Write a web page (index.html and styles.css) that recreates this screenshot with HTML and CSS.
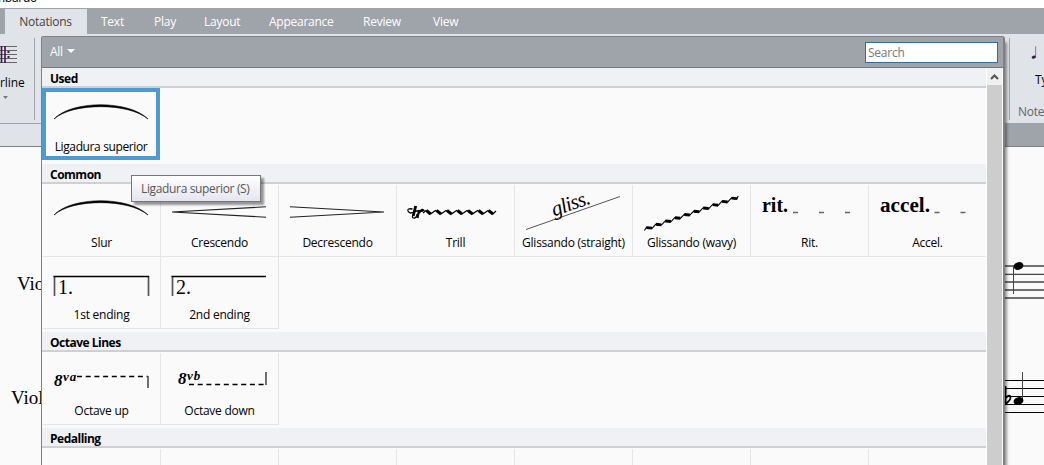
FILE: index.html
```html
<!DOCTYPE html>
<html lang="en">
<head>
<meta charset="utf-8">
<title>Notations</title>
<link rel="stylesheet" href="styles.css">
</head>
<body>
<div class="app">
  <div class="titlebar"><span>mbardo</span></div>
  <nav class="tabs">
    <span class="tab active">Notations</span><span class="tab t-text">Text</span><span class="tab t-play">Play</span><span class="tab t-layout">Layout</span><span class="tab t-app">Appearance</span><span class="tab t-review">Review</span><span class="tab t-view">View</span>
  </nav>
  <div class="ribbon">
    <div class="group barline">
      <svg width="18" height="18" viewBox="0 0 18 18"><path d="M0 .5H17M0 4.5H17M0 8.5H17M0 12.5H17M0 16.5H17" stroke="#666" fill="none"/><path d="M1.500 0V17M5 0V17" stroke="#42154f" stroke-width="1.6"/><path d="M7.500 5h2v2h-2zM7.500 10h2v2h-2z" fill="#42154f"/></svg>
      <span class="rlabel">rline</span>
      <svg class="drop" width="6" height="4"><path d="M0 0H5L2.500 3Z" fill="#777"/></svg>
    </div>
    <div class="group note">
      <svg width="34" height="20" viewBox="0 0 34 20"><path d="M28.500 3V18" stroke="#74577d"/><ellipse cx="26" cy="17.500" rx="2.800" ry="1.900" fill="#42154f" transform="rotate(-20 26 17.500)"/></svg>
      <span class="rlabel ty">Ty</span>
      <span class="gname">Note</span>
    </div>
  </div>
  <div class="strip"><div class="strip-start"></div></div>
  <div class="score">
    <span class="inst v1">Vio</span>
    <span class="inst v2">Viol</span>
    <svg class="staves" width="60" height="318" viewBox="984 147 60 318"><g fill="none" stroke="#444"><path d="M984 266H1044M984 274.300H1044M984 282H1044M984 290H1044M984 298H1044" stroke-width="1.300"/><path d="M984 380.500H1044M984 388.500H1044M984 396.500H1044M984 404.500H1044M984 412.500H1044" stroke="#000"/><path d="M1013.500 267V294M1022.500 372V400"/></g><ellipse cx="1018.500" cy="266" rx="5" ry="3.800" transform="rotate(-18 1018.500 266)"/><ellipse cx="1018.500" cy="401" rx="5" ry="3.800" transform="rotate(-18 1018.500 401)"/><path d="M1005.500 386V404Q1011 400 1010.500 397T1005.500 398" fill="none" stroke="#000" stroke-width="1.800"/></svg>
  </div>
</div>

<div class="gallery">
  <header class="bar"><span class="filter">All<svg width="8" height="5"><path d="M0 0H8L4 4Z" fill="#fff"/></svg></span><input class="search" placeholder="Search"></header>
  <div class="body">
    <div class="list">
      <h2>Used</h2>
      <div class="grid">
        <div class="item selected"><svg viewBox="0 0 117 48"><path d="M11 30C29 11 86 11 105 30C86 13.500 29 13.500 11 30Z" stroke="#000" stroke-width=".6"/></svg><span class="l-lig">Ligadura superior</span></div>
      </div>
      <h2>Common</h2>
      <div class="grid">
        <div class="item"><svg viewBox="0 0 117 48"><path d="M11 30C29 11 86 11 105 30C86 13.500 29 13.500 11 30Z" stroke="#000" stroke-width=".6"/></svg><span>Slur</span></div>
        <div class="item"><svg viewBox="0 0 117 48"><path class="ln" d="M105 21.800L11 27L105 32.200"/></svg><span>Crescendo</span></div>
        <div class="item"><svg viewBox="0 0 117 48"><path class="ln" d="M11 21.800L105 27L11 32.200"/></svg><span>Decrescendo</span></div>
        <div class="item"><svg viewBox="0 0 117 48"><g fill="none" stroke="#000"><path d="M18 21L15.500 31Q15 33.500 18 33Q20 32 20 29M15.500 24Q10 23 11 26Q13 30 18 26H26" stroke-width="1.300"/><path d="M19 21L16.500 31M22 25L20.500 33M22 28Q25 23 27 26" stroke-width="2.200"/><path d="M26 28L29 25.500L33.500 29L38.500 25.500L44 29L49 25.500L54.500 29L59.500 25.500L65 29L70 25.500L75.500 29L80.500 25.500L86 29L91 25.500L96 29L99 26" stroke-width="1.200"/><path d="M29.500 25.500L33.500 29M39.500 25.500L44 29M50 25.500L54.500 29M60.500 25.500L65 29M71 25.500L75.500 29M81.500 25.500L86 29M91.500 25.500L96 29" stroke-width="3"/></g></svg><span>Trill</span></div>
        <div class="item"><svg viewBox="0 0 117 48"><path d="M11 44.500L105 11.500" stroke="#555"/><text class="gliss" x="39" y="31.500" transform="rotate(-19.500 39 31.500)" textLength="40">gliss.</text></svg><span>Glissando (straight)</span></div>
        <div class="item"><svg viewBox="0 0 117 48"><g transform="translate(11 44.500) rotate(-19.100)" fill="none" stroke="#000"><path d="M0 1L3-1.200L8 1.500L13-1.200L18 1.500L23-1.200L28 1.500L33-1.200L38 1.500L43-1.200L48 1.500L53-1.200L58 1.500L63-1.200L68 1.500L73-1.200L78 1.500L83-1.200L88 1.500L93-1.200L98 1.500L100-1" stroke-width="1.100"/><path d="M3-1L8 1.300M13-1L18 1.300M23-1L28 1.300M33-1L38 1.300M43-1L48 1.300M53-1L58 1.300M63-1L68 1.300M73-1L78 1.300M83-1L88 1.300M93-1L98 1.300" stroke-width="2.900"/></g></svg><span>Glissando (wavy)</span></div>
        <div class="item"><svg viewBox="0 0 117 48"><text class="tempo" x="11" y="27" textLength="26" lengthAdjust="spacingAndGlyphs">rit.</text><path class="dash" d="M42 27.500H47M68 27.500H73M94 27.500H99"/></svg><span>Rit.</span></div>
        <div class="item"><svg viewBox="0 0 117 48"><text class="tempo" x="11" y="27" textLength="50" lengthAdjust="spacingAndGlyphs">accel.</text><path class="dash" d="M65.500 27.500H70.500M91.500 27.500H96.500"/></svg><span>Accel.</span></div>
        <div class="item"><svg viewBox="0 0 117 48"><path d="M11.500 39V19M105.500 39V19" stroke="#555" stroke-width="1.700"/><path d="M10.500 19.500H106" stroke="#000" stroke-width="1.300"/><text class="num" x="15" y="37">1.</text></svg><span>1st ending</span></div>
        <div class="item"><svg viewBox="0 0 117 48"><path d="M11.500 39V19" stroke="#555" stroke-width="1.700"/><path d="M10.500 19.500H105" stroke="#000" stroke-width="1.300"/><text class="num" x="15" y="37">2.</text></svg><span>2nd ending</span></div>
      </div>
      <h2>Octave Lines</h2>
      <div class="grid">
        <div class="item"><svg viewBox="0 0 117 48"><text class="eight" x="11" y="33">8</text><text class="sup" x="20" y="28" textLength="13">va</text><path d="M34 23.500H105" stroke="#000" stroke-width="1.300" stroke-dasharray="5 3.700"/><path d="M105 23V35" stroke="#555" stroke-width="1.700"/></svg><span>Octave up</span></div>
        <div class="item"><svg viewBox="0 0 117 48"><text class="eight" x="17" y="31">8</text><text class="sup" x="26" y="27" textLength="13">vb</text><path d="M28 31.500H105" stroke="#000" stroke-width="1.300" stroke-dasharray="5 3.700"/><path d="M105 19V32" stroke="#555" stroke-width="1.700"/></svg><span>Octave down</span></div>
      </div>
      <h2>Pedalling</h2>
      <div class="grid last">
        <div class="item"></div><div class="item"></div><div class="item"></div><div class="item"></div><div class="item"></div><div class="item"></div><div class="item"></div><div class="item"></div>
      </div>
    </div>
    <div class="scroll"><div class="up"><svg width="9" height="6"><path d="M1 5L4.500 1.500L8 5" fill="none" stroke="#555" stroke-width="2"/></svg></div></div>
  </div>
</div>
<div class="tooltip">Ligadura superior (S)</div>
</body>
</html>
```
FILE: styles.css
```css
* { box-sizing: border-box; }
html, body { margin: 0; height: 465px; overflow: hidden; }
body { position: relative; width: 1044px; font: 12px/16px "Open Sans", "Noto Sans", sans-serif; letter-spacing: -0.25px; color: #000; background: #fafafa; }
.app { height: 465px; display: flex; flex-direction: column; }
.titlebar { height: 8px; background: #fff; overflow: hidden; display: flex; align-items: flex-end; }
.titlebar span { height: 16px; margin: 0 0 2px -6px; }
.tabs { height: 26px; background: #9fa3aa; display: flex; padding-left: 5px; color: #fff; line-height: 27px; }
.tab { white-space: nowrap; }
.active { background: #e0e3e8; width: 82px; padding-right: 1px; text-align: center; color: #444; margin-top: 1px; line-height: 25px; }
.t-text { margin-left: 14px; width: 53px; }
.t-play { width: 50px; }
.t-layout { width: 65px; }
.t-app { width: 94px; }
.t-review { width: 70px; }
.ribbon { height: 89px; background: #e0e3e8; display: flex; justify-content: space-between; padding-top: 4px; }
.group { height: 82px; display: flex; flex-direction: column; }
.barline { width: 35px; border-right: 1px solid #9fa3aa; padding-top: 8px; }
.rlabel { margin-top: 11px; height: 16px; letter-spacing: -0.1px; }
.drop { margin: 5px 0 0 3px; }
.note { width: 35px; border-left: 1px solid #9fa3aa; padding-top: 6px; overflow: hidden; }
.note .ty { margin: 13px 0 0 25px; }
.gname { margin: 16px 0 0 8px; color: #666; }
.strip { height: 24px; background: #9fa3aa; border-bottom: 1px solid #808080; }
.strip-start { width: 41px; height: 23px; background: #e0e3e8; border-top: 1px solid #9fa3aa; }
.score { flex: 1; position: relative; }
.inst { position: absolute; font: 19px/24px "Liberation Serif", serif; letter-spacing: 0; }
.v1 { left: 17px; top: 125px; }
.v2 { left: 11px; top: 239px; }
.staves { position: absolute; right: 0; top: 0; }
.gallery { position: absolute; left: 41px; top: 36px; width: 964px; height: 429px; border: 1px solid #808080; border-right-width: 2px; border-bottom: 0; border-radius: 2px 3px 0 0; background: #fafafa; box-shadow: 3px 5px 3px -1px rgba(0,0,0,.4); display: flex; flex-direction: column; }
.bar { height: 31px; flex: none; background: #9fa3aa; border-bottom: 1px solid #777; display: flex; justify-content: space-between; align-items: flex-start; padding: 5px 5px 0 8px; color: #fff; }
.filter { display: flex; align-items: center; gap: 4px; height: 19px; }
.filter svg { margin-bottom: 1px; }
.search { width: 133px; height: 21px; border: 1px solid #0078d7; padding: 0 2px; font: inherit; letter-spacing: -0.25px; background: #fff; outline: none; }
.search::placeholder { color: #777; }
.body { flex: 1; min-height: 0; display: flex; overflow: hidden; }
.list { width: 944px; overflow: hidden; }
h2 { margin: 0; height: 20px; padding: 3px 8px 0; line-height: 16px; font-size: 12px; font-weight: 700; letter-spacing: -0.5px; background: #f0f1f5; border-bottom: 2px solid #cfd0d4; }
.grid { display: grid; grid-template-columns: repeat(8, 118px); grid-auto-rows: 72px; padding: 1px 0 3px 1px; }
.last { grid-auto-rows: 16px; padding-bottom: 0; }
.last .item { border-bottom: 0; }
.item { border-right: 1px solid #e5e5e7; border-bottom: 1px solid #e5e5e7; display: flex; flex-direction: column; align-items: center; white-space: nowrap; }
.item svg { width: 117px; height: 48px; flex: none; overflow: visible; }
.item span { margin-top: 2px; line-height: 16px; }
.l-lig { letter-spacing: -0.38px; }
.selected { box-shadow: inset 0 0 0 4px #4e9bd3; margin: -1px 0 0 -1px; width: 118px; height: 72px; border: 0; }
.selected svg { margin-top: 1px; }
.ln { fill: none; stroke: #222; stroke-width: 1.1; }
.dash { stroke: #666; stroke-width: 1.7; fill: none; }
.gliss { font: italic 21px "Liberation Serif", serif; letter-spacing: 0; }
.tempo { font: bold 20px "Liberation Serif", serif; letter-spacing: 0; }
.num { font: 20px "Liberation Serif", serif; letter-spacing: 0; }
.eight { font: italic bold 17px "Liberation Serif", serif; }
.sup { font: italic bold 13px "Liberation Serif", serif; }
.scroll { width: 16px; background: #cdcdcd; border-left: 1px solid #fff; }
.up { height: 17px; background: #f0f0f0; display: flex; align-items: center; justify-content: center; }
.tooltip { position: absolute; left: 131px; top: 175px; width: 130px; height: 27px; border: 1px solid #767676; background: linear-gradient(#fff, #e4e5f0); color: #575757; line-height: 26px; letter-spacing: -0.35px; padding-left: 9px; white-space: nowrap; box-shadow: 3px 3px 2px rgba(0,0,0,.4); }
```
